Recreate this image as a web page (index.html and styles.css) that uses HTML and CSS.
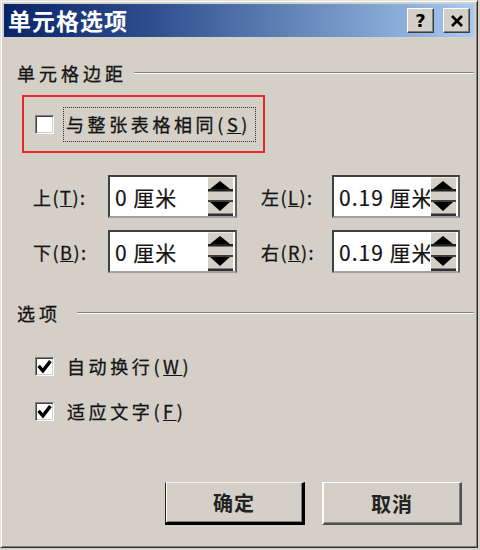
FILE: index.html
```html
<!DOCTYPE html>
<html lang="zh-CN">
<head>
<meta charset="utf-8">
<title>单元格选项</title>
<link rel="stylesheet" href="styles.css">
</head>
<body>
<div class="dialog">
  <div class="titlebar">
    <span class="title">单元格选项</span>
    <div class="tbtns">
      <span class="tbtn help">?</span>
      <span class="tbtn close">
        <svg width="14" height="12" viewBox="0 0 14 12"><path d="M2 1 L12 11 M12 1 L2 11" stroke="#000" stroke-width="2.6" fill="none"/></svg>
      </span>
    </div>
  </div>
  <div class="content">
    <div class="group-head"><span class="gtext">单元格边距</span><i class="rule"></i></div>
    <div class="highlight">
      <span class="check"></span>
      <span class="focus">与整张表格相同(<u>S</u>)</span>
    </div>
    <div class="spins">
      <span class="lbl">上(<u>T</u>):</span>
      <div class="spin"><span class="val">0 厘米</span>
        <svg class="arrows" width="26" height="39" viewBox="0 0 26 39"><rect width="26" height="39" fill="#d4d0c8"/><path d="M0 0 H26 M0.5 0 V39" stroke="#fff" stroke-width="1"/><path d="M13 4 L23 12 H3 Z" fill="#000"/><rect x="1" y="12" width="25" height="2.5" fill="#202020"/><rect x="1" y="23" width="25" height="2" fill="#404040"/><path d="M3 25 H23 L13 34 Z" fill="#000"/><rect x="1" y="36.5" width="25" height="2.5" fill="#303030"/></svg>
      </div>
      <span class="lbl rl">左(<u>L</u>):</span>
      <div class="spin"><span class="val">0.19 厘米</span>
        <svg class="arrows" width="26" height="39" viewBox="0 0 26 39"><rect width="26" height="39" fill="#d4d0c8"/><path d="M0 0 H26 M0.5 0 V39" stroke="#fff" stroke-width="1"/><path d="M13 4 L23 12 H3 Z" fill="#000"/><rect x="1" y="12" width="25" height="2.5" fill="#202020"/><rect x="1" y="23" width="25" height="2" fill="#404040"/><path d="M3 25 H23 L13 34 Z" fill="#000"/><rect x="1" y="36.5" width="25" height="2.5" fill="#303030"/></svg>
      </div>
      <span class="lbl">下(<u>B</u>):</span>
      <div class="spin"><span class="val">0 厘米</span>
        <svg class="arrows" width="26" height="39" viewBox="0 0 26 39"><rect width="26" height="39" fill="#d4d0c8"/><path d="M0 0 H26 M0.5 0 V39" stroke="#fff" stroke-width="1"/><path d="M13 4 L23 12 H3 Z" fill="#000"/><rect x="1" y="12" width="25" height="2.5" fill="#202020"/><rect x="1" y="23" width="25" height="2" fill="#404040"/><path d="M3 25 H23 L13 34 Z" fill="#000"/><rect x="1" y="36.5" width="25" height="2.5" fill="#303030"/></svg>
      </div>
      <span class="lbl rl">右(<u>R</u>):</span>
      <div class="spin"><span class="val">0.19 厘米</span>
        <svg class="arrows" width="26" height="39" viewBox="0 0 26 39"><rect width="26" height="39" fill="#d4d0c8"/><path d="M0 0 H26 M0.5 0 V39" stroke="#fff" stroke-width="1"/><path d="M13 4 L23 12 H3 Z" fill="#000"/><rect x="1" y="12" width="25" height="2.5" fill="#202020"/><rect x="1" y="23" width="25" height="2" fill="#404040"/><path d="M3 25 H23 L13 34 Z" fill="#000"/><rect x="1" y="36.5" width="25" height="2.5" fill="#303030"/></svg>
      </div>
    </div>
    <div class="group-head g2"><span class="gtext">选项</span><i class="rule"></i></div>
    <div class="opt o1">
      <span class="check"><svg width="15" height="15" viewBox="0 0 14 14"><path d="M1.5 6.5 L5.5 11 L12.5 2" stroke="#000" stroke-width="3.2" fill="none"/></svg></span>
      <span class="otext">自动换行(<u>W</u>)</span>
    </div>
    <div class="opt o2">
      <span class="check"><svg width="15" height="15" viewBox="0 0 14 14"><path d="M1.5 6.5 L5.5 11 L12.5 2" stroke="#000" stroke-width="3.2" fill="none"/></svg></span>
      <span class="otext">适应文字(<u>F</u>)</span>
    </div>
    <div class="buttons">
      <span class="btn default">确定</span>
      <span class="btn">取消</span>
    </div>
  </div>
</div>
</body>
</html>
```
FILE: styles.css
```css
* { box-sizing: border-box; }
html, body { margin: 0; padding: 0; background: #d4d0c8; }
body {
  font-family: "Noto Sans CJK SC", "Noto Sans", sans-serif;
  color: #141414;
  width: 480px;
  height: 550px;
  overflow: hidden;
}
.dialog {
  width: 478px;
  height: 548px;
  background: #d4d0c8;
  border: 1px solid;
  border-color: #e4e2de #303030 #303030 #e4e2de;
  box-shadow: inset 1px 1px #ffffff, inset -1px -1px #808080;
  padding: 3px;
}
.titlebar {
  height: 33px;
  background: linear-gradient(to right, #0a246a 0%, #2c4c8c 30%, #a6caf0 100%);
  display: flex;
  align-items: center;
  justify-content: space-between;
  padding-left: 4px;
  padding-right: 4px;
}
.title {
  color: #fff;
  font-size: 23px;
  font-weight: bold;
  letter-spacing: 1px;
  line-height: 33px;
}
.tbtns { display: flex; gap: 9px; }
.tbtn {
  width: 27px;
  height: 25px;
  background: #d4d0c8;
  border: 1px solid;
  border-color: #ffffff #404040 #404040 #ffffff;
  box-shadow: inset -1px -1px #808080;
  display: flex;
  align-items: center;
  justify-content: center;
  font-family: "DejaVu Sans", sans-serif;
  font-weight: bold;
  font-size: 18px;
  color: #000;
}
.content { padding-left: 13px; }
.group-head {
  margin-top: 25px;
  height: 22px;
  display: flex;
  align-items: center;
}
.gtext {
  font-size: 18px;
  letter-spacing: 4px;
  line-height: 22px;
  -webkit-text-stroke: 0.3px #141414;
}
.rule {
  flex: 1;
  margin-left: 7px;
  border-top: 1px solid #808080;
  border-bottom: 1px solid #ffffff;
}
.g2 { margin-top: 29px; }
.g2 .rule { margin-left: 16px; }
.highlight {
  margin-top: 11px;
  margin-left: 5px;
  width: 243px;
  height: 58px;
  border: 2px solid #e8262b;
  display: flex;
  align-items: center;
  padding-left: 11px;
}
.check {
  width: 19px;
  height: 19px;
  background: #fff;
  border: 1px solid;
  border-color: #808080 #ffffff #ffffff #808080;
  box-shadow: inset 1px 1px #404040, inset -1px -1px #d4d0c8;
  display: flex;
  align-items: center;
  justify-content: center;
  flex: none;
}
.focus {
  margin-left: 9px;
  width: 193px;
  height: 35px;
  border: 1px dotted #333;
  display: flex;
  align-items: center;
  padding-left: 2px;
  font-size: 18px;
  letter-spacing: 3.6px;
  white-space: nowrap;
  -webkit-text-stroke: 0.3px #141414;
}
.spins {
  margin-top: 22px;
  margin-left: 16px;
  display: grid;
  grid-template-columns: 75px 129px 95px 128px;
  grid-auto-rows: 43px;
  row-gap: 12px;
  align-items: center;
}
.lbl {
  font-size: 18px;
  letter-spacing: 1.5px;
  white-space: nowrap;
  -webkit-text-stroke: 0.3px #141414;
}
.rl { padding-left: 24px; }
.spin {
  height: 43px;
  background: #fff;
  border: 2px solid;
  border-color: #404040 #606060 #a0a0a0 #404040;
  display: flex;
  align-items: center;
  padding-right: 2px;
  overflow: hidden;
}
.val {
  flex: 1;
  min-width: 0;
  overflow: hidden;
  white-space: nowrap;
  padding-left: 5px;
  font-size: 21px;
  letter-spacing: 1px;
  -webkit-text-stroke: 0.2px #141414;
}
.arrows { flex: none; display: block; }
.opt {
  margin-left: 18px;
  height: 24px;
  display: flex;
  align-items: center;
}
.o1 { margin-top: 30px; }
.o2 { margin-top: 21px; }
.otext {
  margin-left: 13px;
  font-size: 18px;
  letter-spacing: 3.6px;
  white-space: nowrap;
  -webkit-text-stroke: 0.3px #141414;
}
.buttons {
  margin-top: 59px;
  margin-left: 148px;
  display: flex;
  gap: 17px;
}
.btn {
  width: 140px;
  height: 43px;
  display: flex;
  align-items: center;
  justify-content: center;
  font-size: 20px;
  font-weight: bold;
  letter-spacing: 1px;
  color: #222;
  background: #d4d0c8;
  border-style: solid;
  border-width: 1px 2px 2px 2px;
  border-color: #ffffff #505050 #505050 #ffffff;
  box-shadow: inset -1px -1px #808080;
}
.btn.default {
  border-width: 1px 3px 3px 1px;
  border-color: #f0f0f0 #000 #000 #202020;
  box-shadow: inset 1px 0 #ffffff, inset -1px -1px #808080;
}
```
